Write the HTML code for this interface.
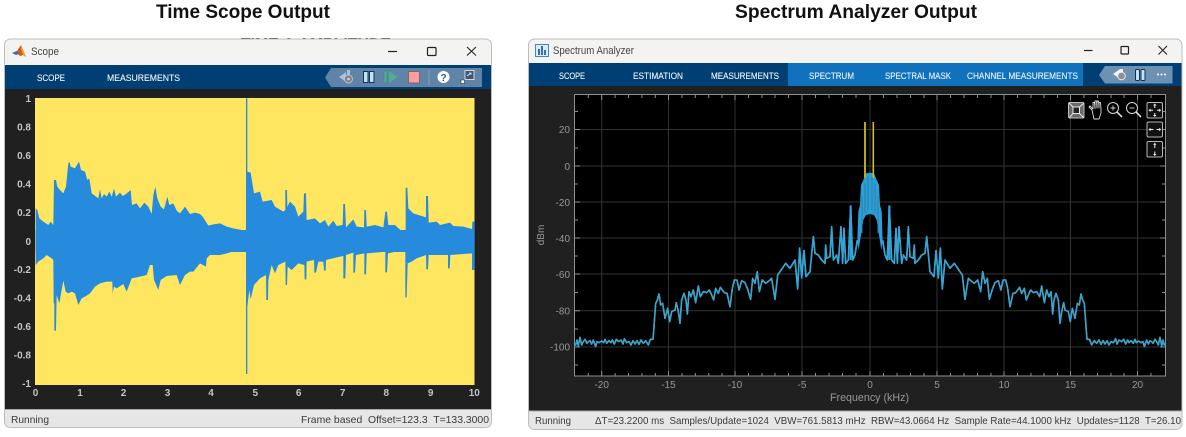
<!DOCTYPE html>
<html><head><meta charset="utf-8"><title>Scope outputs</title>
<style>
html,body{margin:0;padding:0;background:#fff;width:1186px;height:437px;overflow:hidden}
svg{display:block;filter:blur(.35px)}
text{font-family:"Liberation Sans",sans-serif;white-space:pre}
.h{font-weight:700;font-size:19px;fill:#111}
.tb{font-size:9.2px;fill:#eef4f9;stroke:#eef4f9;stroke-width:.12}
.tt{font-size:11px;fill:#444}
.st{font-size:10.5px;fill:#3a3a3a}
.lb{font-size:10px;font-weight:700;fill:#c4c4c4}
.sl{font-size:10px;fill:#979797}
.ns{vector-effect:non-scaling-stroke}
</style></head><body>
<svg width="1186" height="437" viewBox="0 0 1186 437" xmlns="http://www.w3.org/2000/svg">
<rect width="1186" height="437" fill="#fff"/>
<text class="h" x="156" y="18" textLength="174" lengthAdjust="spacingAndGlyphs">Time Scope Output</text>
<text class="h" x="735" y="18" textLength="242" lengthAdjust="spacingAndGlyphs">Spectrum Analyzer Output</text>
<text x="241" y="46.500" font-size="12" font-weight="700" fill="#333" textLength="150" lengthAdjust="spacingAndGlyphs">TIME &amp; AMPLITUDE</text>

<!-- LEFT WINDOW -->
<rect x="4.500" y="39" width="487" height="388.500" rx="6" fill="#f3f3f1" stroke="#bcbcbc"/>
<path d="M5 65H491V409H5Z" fill="#202020"/>
<rect x="5" y="65" width="486" height="24" fill="#003f73"/>
<path d="M5 409H491V421a6 6 0 0 1-6 6H11a6 6 0 0 1-6-6Z" fill="#e6e6e6"/>
<path d="M5 409.500H491" stroke="#a8a8a8"/>
<path d="M12 53l5-2 4-6 5 12-3-2-3 1-3-3z" fill="#d9541e"/><path d="M12 53l5-2 2 3-3 1z" fill="#3a6ea5"/><path d="M21 45l5 12-3-2-2-6z" fill="#f0a020"/>
<text class="tt" x="31" y="55" textLength="28" lengthAdjust="spacingAndGlyphs">Scope</text>
<path d="M388 51.500h9" stroke="#222" stroke-width="1.200"/><rect x="427.500" y="47.500" width="8.500" height="8" rx="1" fill="none" stroke="#222" stroke-width="1.200"/><path d="M467 47l9 8.500M476 47l-9 8.500" stroke="#222" stroke-width="1.100"/>
<text class="tb" x="37" y="81" textLength="28" lengthAdjust="spacingAndGlyphs">SCOPE</text>
<text class="tb" x="107" y="81" textLength="73" lengthAdjust="spacingAndGlyphs">MEASUREMENTS</text>
<path d="M325 77.500L331 68H482V87H331Z" fill="#5f84a8"/>
<path d="M339 77l7-5v10z" fill="#a9c2d8"/><path d="M347 70h3v6h-3z" fill="#a9c2d8"/><circle cx="348.500" cy="79" r="4" fill="#7f8388" stroke="#b3c2cf"/><circle cx="348.500" cy="79" r="1.300" fill="#cfd8e0"/>
<rect x="363.500" y="71.500" width="4.500" height="11" fill="#bfe3f6" stroke="#17324d"/><rect x="369.500" y="71.500" width="4.500" height="11" fill="#bfe3f6" stroke="#17324d"/>
<rect x="384" y="71" width="3" height="12" fill="#52ad91" stroke="#3d8a78" stroke-width=".6"/><path d="M389 71l8.500 6-8.500 6z" fill="#52ad91"/>
<rect x="408.500" y="71.500" width="11" height="11.500" fill="#ff9d9d" stroke="#6d6d6d"/>
<path d="M429 70v15" stroke="#86a0b9"/>
<circle cx="443.500" cy="77" r="6" fill="#fff"/><text x="443.500" y="81" font-size="10" font-weight="700" text-anchor="middle" fill="#1c5a90">?</text>
<rect x="465" y="70.500" width="9" height="9" fill="#3f5870" stroke="#ccd7e0"/><path d="M467 76l4-3M469 73h2v2" stroke="#e0e8ee" fill="none" stroke-width=".8"/><rect x="461" y="80" width="3.500" height="3.500" fill="#fff" stroke="#333" stroke-width=".6"/>

<rect x="35" y="98" width="439.500" height="287" fill="#ffe661"/>
<g fill="#268bdc">
<rect x="35.500" y="230" width="439" height="22"/>
<g transform="translate(0 90) scale(.33333)"><polygon points="107,453 107,355 112,360 118,385 130,395 145,405 152,395 160,405 162,270 168,270 172,290 180,300 190,310 198,290 205,220 208,215 212,230 225,235 237,215 243,240 255,245 262,270 268,265 275,310 295,325 300,298 305,325 312,312 320,320 328,305 335,320 342,296 348,320 360,308 368,318 378,312 392,300 396,345 410,340 420,355 433,338 445,350 455,372 460,315 466,290 472,325 482,350 492,358 502,320 508,345 520,340 530,362 540,370 555,350 570,372 585,368 600,372 608,380 625,407 640,403 660,400 680,410 700,415 735,422 738,422 738,453"/></g>
<g transform="translate(0 260) scale(.33333)"><polygon points="107,-57 107,15 115,5 130,-5 140,-15 155,-5 160,0 161,130 163,130 163,212 168,212 170,105 178,130 185,90 190,62 197,95 205,100 215,95 225,100 235,135 245,115 255,110 270,100 285,80 300,70 320,65 337,65 338,100 342,80 350,85 370,72 380,95 395,55 420,50 440,45 450,15 458,15 462,60 475,90 482,60 500,48 530,45 540,75 555,45 570,35 580,35 600,10 618,20 620,-5 630,-15 660,-15 680,-20 710,-28 738,-28 738,-57"/></g>
<g transform="translate(240 90) scale(.33333)"><polygon points="18,453 18,25 22,25 22,245 32,248 42,310 60,305 68,335 95,330 105,350 130,365 136,360 136,300 141,300 142,350 150,335 165,350 175,380 190,365 192,310 198,310 200,390 225,385 240,400 255,390 265,410 280,392 290,408 308,405 310,342 315,342 318,412 340,388 350,410 372,412 373,360 378,360 380,410 405,405 430,412 436,365 441,365 445,405 465,405 490,428 497,425 497,293 502,293 505,355 520,370 558,382 558,318 564,318 566,398 590,395 600,405 630,398 640,408 670,410 696,417 697,395 704,395 704,453"/></g>
<g transform="translate(240 260) scale(.33333)"><polygon points="18,-57 18,342 22,342 22,140 28,90 32,118 42,75 60,55 78,45 79,120 84,120 85,60 95,15 105,40 115,15 136,5 137,75 141,75 143,20 155,30 175,10 193,15 194,58 199,58 200,5 222,0 223,38 228,38 235,5 250,5 252,32 257,32 258,0 300,-10 310,-12 310,55 316,55 318,-15 340,-22 340,38 345,38 348,-15 373,-20 373,43 378,43 380,-20 436,-25 436,37 441,37 444,-20 490,-30 496,-28 496,112 500,112 503,10 515,5 530,-5 558,-15 559,28 564,28 566,-15 624,-15 624,25 629,25 631,-15 696,-20 696,30 704,30 704,-57"/></g>
</g>
<g class="lb" text-anchor="end">
<text x="31" y="102">1</text><text x="31" y="130.500">0.8</text><text x="31" y="159">0.6</text><text x="31" y="187.500">0.4</text><text x="31" y="216">0.2</text><text x="31" y="245">0</text><text x="31" y="273">-0.2</text><text x="31" y="301.500">-0.4</text><text x="31" y="330">-0.6</text><text x="31" y="358.500">-0.8</text><text x="31" y="387">-1</text>
</g>
<g class="lb" text-anchor="middle">
<text x="35.500" y="396">0</text><text x="80" y="396">1</text><text x="123.500" y="396">2</text><text x="167.500" y="396">3</text><text x="211" y="396">4</text><text x="255.300" y="396">5</text><text x="298.700" y="396">6</text><text x="342.700" y="396">7</text><text x="386.300" y="396">8</text><text x="430.700" y="396">9</text><text x="474.300" y="396">10</text>
</g>
<text class="st" x="11" y="423" textLength="38" lengthAdjust="spacingAndGlyphs">Running</text>
<text class="st" x="301" y="423" textLength="188" lengthAdjust="spacingAndGlyphs">Frame based  Offset=123.3  T=133.3000</text>

<!-- RIGHT WINDOW -->
<rect x="528.500" y="39" width="653.500" height="390.500" rx="6" fill="#f3f3f1" stroke="#bcbcbc"/>
<path d="M529 63H1181.500V411H529Z" fill="#202020"/>
<rect x="529" y="63" width="652.500" height="23" fill="#003f73"/>
<rect x="788" y="63" width="295" height="23" fill="#1072bc"/>
<path d="M529 411H1181.500V423a6 6 0 0 1-6 6H535a6 6 0 0 1-6-6Z" fill="#e6e6e6"/>
<path d="M529 411H1181.500" stroke="#a8a8a8"/>
<rect x="535.500" y="44.500" width="13" height="12" fill="#dcebf7" stroke="#4a85b8"/><path d="M538 55v-6h2v6zM541 55v-9h2v9zM544 55v-5h2v5z" fill="#2f73b0"/>
<text class="tt" x="553" y="54" textLength="81" lengthAdjust="spacingAndGlyphs">Spectrum Analyzer</text>
<path d="M1084 50.500h8.500" stroke="#222" stroke-width="1.200"/><rect x="1121" y="46.500" width="7.500" height="7.500" rx="1" fill="none" stroke="#222" stroke-width="1.200"/><path d="M1158.500 46l8.500 8.500M1167 46l-8.500 8.500" stroke="#222" stroke-width="1.100"/>
<g class="tb">
<text x="559" y="79" textLength="26" lengthAdjust="spacingAndGlyphs">SCOPE</text>
<text x="633" y="79" textLength="50" lengthAdjust="spacingAndGlyphs">ESTIMATION</text>
<text x="711" y="79" textLength="68" lengthAdjust="spacingAndGlyphs">MEASUREMENTS</text>
<text x="809" y="79" textLength="45" lengthAdjust="spacingAndGlyphs">SPECTRUM</text>
<text x="885" y="79" textLength="66" lengthAdjust="spacingAndGlyphs">SPECTRAL MASK</text>
<text x="967" y="79" textLength="111" lengthAdjust="spacingAndGlyphs">CHANNEL MEASUREMENTS</text>
</g>
<path d="M1099 75L1105 66H1172.500V83.500H1105Z" fill="#6d91b3"/>
<path d="M1113 74l7-5v10z" fill="#f0f4f7"/><rect x="1120" y="69" width="3" height="6" fill="#f0f4f7"/><circle cx="1121.500" cy="76" r="3.800" fill="#8d8f92" stroke="#e4e9ee"/>
<rect x="1135.500" y="69.500" width="4" height="11" rx="1" fill="#bfe3f6" stroke="#17324d"/><rect x="1141" y="69.500" width="4" height="11" rx="1" fill="#bfe3f6" stroke="#17324d"/>
<g fill="#fff"><circle cx="1158" cy="74.500" r="1"/><circle cx="1161.500" cy="74.500" r="1"/><circle cx="1165" cy="74.500" r="1"/></g>

<rect x="574" y="94.500" width="591.500" height="281.500" fill="#000"/>
<g stroke="#333" fill="none">
<path d="M601.700 95V376M668.500 95V376M735 95V376M802 95V376M870 95V376M937 95V376M1004 95V376M1070.500 95V376M1137.500 95V376"/>
<path d="M574 129.500H1165M574 166H1165M574 202H1165M574 238H1165M574 274H1165M574 310.700H1165M574 347H1165"/>
</g>
<g stroke="#8f8f8f" fill="none">
<path d="M574.500 94.500H1165.500V376H574.500Z"/>
<path d="M588.300 95v3M601.700 95v5M615.100 95v3M628.500 95v3M641.900 95v3M655.300 95v3M668.500 95v5M682 95v3M695.300 95v3M708.700 95v3M722 95v3M735 95v5M748.500 95v3M762 95v3M775 95v3M788.500 95v3M802 95v5M815.500 95v3M829 95v3M842.500 95v3M856 95v3M870 95v5M883.500 95v3M897 95v3M910.500 95v3M924 95v3M937 95v5M950.500 95v3M964 95v3M977.500 95v3M991 95v3M1004 95v5M1017.500 95v3M1031 95v3M1044 95v3M1057.500 95v3M1070.500 95v5M1084 95v3M1097.500 95v3M1111 95v3M1124 95v3M1137.500 95v5M1151 95v3"/>
<path d="M588.300 376v-3M601.700 376v-5M615.100 376v-3M628.500 376v-3M641.900 376v-3M655.300 376v-3M668.500 376v-5M682 376v-3M695.300 376v-3M708.700 376v-3M722 376v-3M735 376v-5M748.500 376v-3M762 376v-3M775 376v-3M788.500 376v-3M802 376v-5M815.500 376v-3M829 376v-3M842.500 376v-3M856 376v-3M870 376v-5M883.500 376v-3M897 376v-3M910.500 376v-3M924 376v-3M937 376v-5M950.500 376v-3M964 376v-3M977.500 376v-3M991 376v-3M1004 376v-5M1017.500 376v-3M1031 376v-3M1044 376v-3M1057.500 376v-3M1070.500 376v-5M1084 376v-3M1097.500 376v-3M1111 376v-3M1124 376v-3M1137.500 376v-5M1151 376v-3"/>
<path d="M575 111.500h3M575 129.500h5M575 148h3M575 166h5M575 184h3M575 202h5M575 220h3M575 238h5M575 256h3M575 274h5M575 292.500h3M575 310.700h5M575 329h3M575 347h5M575 365h3"/>
<path d="M1165 111.500h-3M1165 129.500h-5M1165 148h-3M1165 166h-5M1165 184h-3M1165 202h-5M1165 220h-3M1165 238h-5M1165 256h-3M1165 274h-5M1165 292.500h-3M1165 310.700h-5M1165 329h-3M1165 347h-5M1165 365h-3"/>
</g>

<path d="M865 122V205M873.300 122V205" stroke="#d2bf1a" stroke-width="1.500" fill="none"/>
<defs>
<g id="half">
<g transform="translate(525 250) scale(.33333)" fill="none" stroke-linejoin="round">
<polyline class="ns" stroke="#5aa3a3" stroke-width="1.600" points="148,280 152,285 156,270 160,288 165,262 170,285 175,275 180,268 186,280 190,275 195,272 200,282 205,270 212,290 216,275 222,278 230,273 236,278 240,268 245,280 252,272 258,278 262,270 268,282 274,268 280,275 288,270 294,282 298,266 305,278 312,275 318,285 324,272 330,282 336,272 342,283 348,270 355,280 362,272 370,285 376,268 384,268 387,230 392,160 397,150 402,132 407,165 413,160 420,205 428,175 434,215 440,185 450,180 454,158 460,185 465,220 470,150 477,130 483,150 487,192 492,125 498,140 505,120 512,158 520,108 526,140 535,125 545,128 553,120 560,135 566,150 572,115 580,130 586,112 598,128 606,130 615,170 622,115 628,90 636,90 642,120 650,92 660,98 668,118 677,148 683,85 690,100 697,65 703,125 712,90 722,100 735,90 740,85 750,148 758,75 765,65"/>
<polyline class="ns" stroke="#2ba6e3" stroke-width="1.500" stroke-dasharray="6 3" points="148,280 152,285 156,270 160,288 165,262 170,285 175,275 180,268 186,280 190,275 195,272 200,282 205,270 212,290 216,275 222,278 230,273 236,278 240,268 245,280 252,272 258,278 262,270 268,282 274,268 280,275 288,270 294,282 298,266 305,278 312,275 318,285 324,272 330,282 336,272 342,283 348,270 355,280 362,272 370,285 376,268 384,268 387,230 392,160 397,150 402,132 407,165 413,160 420,205 428,175 434,215 440,185 450,180 454,158 460,185 465,220 470,150 477,130 483,150 487,192 492,125 498,140 505,120 512,158 520,108 526,140 535,125 545,128 553,120 560,135 566,150 572,115 580,130 586,112 598,128 606,130 615,170 622,115 628,90 636,90 642,120 650,92 660,98 668,118 677,148 683,85 690,100 697,65 703,125 712,90 722,100 735,90 740,85 750,148 758,75 765,65"/>
</g>
<g transform="translate(780 100) scale(.33333)" fill="none" stroke-linejoin="round">
<polyline class="ns" stroke="#5aa3a3" stroke-width="1.600" points="0,515 17,490 30,505 45,480 53,567 59,444 65,534 72,452 78,530 90,515 100,410 105,460 115,465 125,480 135,490 137,435 140,475 150,470 155,380 160,480 170,465 175,490 183,380 188,490 192,385 197,490 205,480 212,318 218,480 225,465 232,420"/>
<polyline class="ns" stroke="#2ba6e3" stroke-width="1.600" stroke-dasharray="7 2" points="0,515 17,490 30,505 45,480 53,567 59,444 65,534 72,452 78,530 90,515 100,410 105,460 115,465 125,480 135,490 137,435 140,475 150,470 155,380 160,480 170,465 175,490 183,380 188,490 192,385 197,490 205,480 212,318 218,480 225,465 232,420"/>
<path d="M232 425L235 335L240 315L243 255L250 240L258 220L270 218V342L258 345L250 360L243 405L236 450Z" fill="#2a9fdc"/>
<path d="M246 290V400M255 250V340M264 230V330" class="ns" stroke="#2f7f9c" stroke-width="1"/>
<path d="M212 318V480" class="ns" stroke="#2ba6e3" stroke-width="2"/>
</g>
</g>
</defs>
<use href="#half"/>
<use href="#half" transform="matrix(-1 0 0 1 1740 0)"/>
<path d="M865 122V178M873.300 122V178" stroke="#d2bf1a" stroke-width="1.500" fill="none"/>

<g class="sl" text-anchor="end">
<text x="570" y="133">20</text><text x="570" y="170">0</text><text x="570" y="206">-20</text><text x="570" y="242">-40</text><text x="570" y="278">-60</text><text x="570" y="314.500">-80</text><text x="570" y="350.500">-100</text>
</g>
<g class="sl" text-anchor="middle">
<text x="601.700" y="388">-20</text><text x="668.500" y="388">-15</text><text x="735" y="388">-10</text><text x="802" y="388">-5</text><text x="870" y="388">0</text><text x="937" y="388">5</text><text x="1004" y="388">10</text><text x="1070.500" y="388">15</text><text x="1137.500" y="388">20</text>
</g>
<text class="sl" x="830" y="401" style="font-size:11px" textLength="79" lengthAdjust="spacingAndGlyphs">Frequency (kHz)</text>
<text class="sl" x="0" y="0" text-anchor="middle" transform="translate(544 235) rotate(-90)">dBm</text>

<!-- plot toolbar -->
<g fill="none" stroke="#bdbdbd">
<rect x="1068.500" y="102.500" width="15.500" height="15.500" rx="1.500" fill="#6b6b6b"/>
<rect x="1073" y="107" width="6.500" height="6.500" stroke="#e8e8e8" fill="#222"/>
<path d="M1069 103l4 4M1084 103l-4.500 4M1069 118l4-4.500M1084 118l-4.500-4.500" stroke="#e8e8e8"/>
<path d="M1092 110l-3-3 1-1 3 3v-6.500h1.500l.5 6v-7.500h1.500l.5 7v-7h1.500l.5 7v-5.500h1.500l.5 6.500v4l-2 6h-5z" stroke="#dcdcdc" stroke-width=".9" stroke-linejoin="round"/>
<circle cx="1113" cy="108" r="5.500" stroke="#d5d5d5"/><path d="M1110.500 108h5M1113 105.500v5" stroke="#d5d5d5" stroke-width=".9"/><path d="M1117 112l5 5" stroke="#eee" stroke-width="1.500"/>
<circle cx="1132" cy="108" r="5.500" stroke="#d5d5d5"/><path d="M1129.500 108h5" stroke="#d5d5d5" stroke-width=".9"/><path d="M1136 112l5 5" stroke="#eee" stroke-width="1.500"/>
<rect x="1147" y="102.500" width="15.500" height="15.500" rx="1.500" stroke="#b8b8b8" fill="#111"/>
<rect x="1147" y="122" width="15.500" height="15" rx="1.500" stroke="#b8b8b8" fill="#111"/>
<rect x="1147" y="141.500" width="15.500" height="15.500" rx="1.500" stroke="#b8b8b8" fill="#111"/>
<path d="M1154.800 105v3M1154.800 113v3M1150 110.300h3M1157 110.300h3M1149.500 129.500h4M1156.500 129.500h4M1154.800 144v4M1154.800 151.500v3.500" stroke="#eee"/>
<path d="M1154.800 103.500l-1.700 2h3.400zM1154.800 117l-1.700-2h3.400zM1148.500 110.300l2-1.700v3.400zM1161.200 110.300l-2-1.700v3.400zM1148.500 129.500l2-1.700v3.400zM1161.200 129.500l-2-1.700v3.400zM1154.800 142.800l-1.700 2h3.400zM1154.800 156l-1.700-2h3.400z" fill="#eee" stroke="none"/>
</g>
<text class="st" x="535" y="424" textLength="36" lengthAdjust="spacingAndGlyphs">Running</text>
<text class="st" x="595" y="424" textLength="586" lengthAdjust="spacingAndGlyphs">ΔT=23.2200 ms  Samples/Update=1024  VBW=761.5813 mHz  RBW=43.0664 Hz  Sample Rate=44.1000 kHz  Updates=1128  T=26.10</text>
</svg>
</body></html>
